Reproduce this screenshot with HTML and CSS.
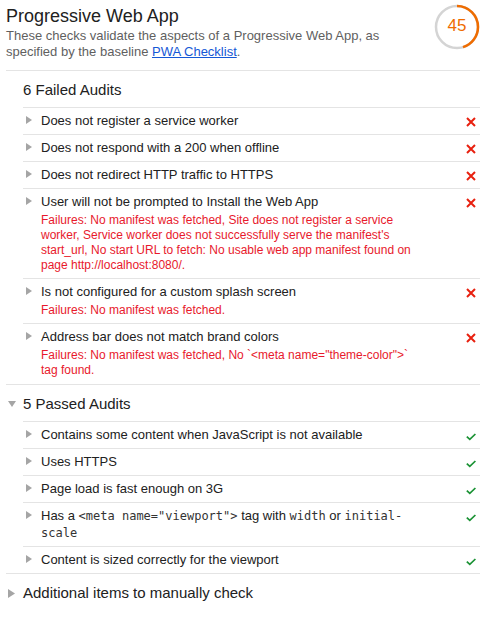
FILE: index.html
```html
<!DOCTYPE html>
<html lang="en">
<head>
<meta charset="utf-8">
<title>Progressive Web App</title>
<link rel="stylesheet" href="styles.css">
</head>
<body>
<div class="report">
  <header class="cat-header">
    <div class="cat-text">
      <div class="cat-title">Progressive Web App</div>
      <div class="cat-desc">These checks validate the aspects of a Progressive Web App, as specified by the baseline <a href="#">PWA Checklist</a>.</div>
    </div>
    <div class="gauge">
      <svg width="46" height="46" viewBox="0 0 46 46">
        <circle cx="23" cy="23" r="21" fill="none" stroke="#d4d4d4" stroke-width="2.5"/>
        <circle cx="23" cy="23" r="21" fill="none" stroke="#ef6c00" stroke-width="2.5" stroke-dasharray="59.4 200" transform="rotate(-90 23 23)"/>
      </svg>
      <span class="gauge-value">45</span>
    </div>
  </header>

  <section class="group">
    <div class="group-head"><span class="head-marker"></span>6 Failed Audits</div>
    <div class="audits">
      <div class="audit">
        <span class="tri"><svg width="6" height="8" viewBox="0 0 6 8"><polygon points="0,0 6,4 0,8" fill="#a5a5a5"/></svg></span>
        <div class="audit-body"><div class="audit-title">Does not register a service worker</div></div>
        <span class="status"><svg width="10" height="10" viewBox="0 0 10 10"><path d="M1 1 L9 9 M9 1 L1 9" stroke="#e8200f" stroke-width="2"/></svg></span>
      </div>
      <div class="audit">
        <span class="tri"><svg width="6" height="8" viewBox="0 0 6 8"><polygon points="0,0 6,4 0,8" fill="#a5a5a5"/></svg></span>
        <div class="audit-body"><div class="audit-title">Does not respond with a 200 when offline</div></div>
        <span class="status"><svg width="10" height="10" viewBox="0 0 10 10"><path d="M1 1 L9 9 M9 1 L1 9" stroke="#e8200f" stroke-width="2"/></svg></span>
      </div>
      <div class="audit">
        <span class="tri"><svg width="6" height="8" viewBox="0 0 6 8"><polygon points="0,0 6,4 0,8" fill="#a5a5a5"/></svg></span>
        <div class="audit-body"><div class="audit-title">Does not redirect HTTP traffic to HTTPS</div></div>
        <span class="status"><svg width="10" height="10" viewBox="0 0 10 10"><path d="M1 1 L9 9 M9 1 L1 9" stroke="#e8200f" stroke-width="2"/></svg></span>
      </div>
      <div class="audit">
        <span class="tri"><svg width="6" height="8" viewBox="0 0 6 8"><polygon points="0,0 6,4 0,8" fill="#a5a5a5"/></svg></span>
        <div class="audit-body">
          <div class="audit-title">User will not be prompted to Install the Web App</div>
          <div class="audit-fail">Failures: No manifest was fetched, Site does not register a service worker, Service worker does not successfully serve the manifest's start_url, No start URL to fetch: No usable web app manifest found on page http://localhost:8080/.</div>
        </div>
        <span class="status"><svg width="10" height="10" viewBox="0 0 10 10"><path d="M1 1 L9 9 M9 1 L1 9" stroke="#e8200f" stroke-width="2"/></svg></span>
      </div>
      <div class="audit">
        <span class="tri"><svg width="6" height="8" viewBox="0 0 6 8"><polygon points="0,0 6,4 0,8" fill="#a5a5a5"/></svg></span>
        <div class="audit-body">
          <div class="audit-title">Is not configured for a custom splash screen</div>
          <div class="audit-fail">Failures: No manifest was fetched.</div>
        </div>
        <span class="status"><svg width="10" height="10" viewBox="0 0 10 10"><path d="M1 1 L9 9 M9 1 L1 9" stroke="#e8200f" stroke-width="2"/></svg></span>
      </div>
      <div class="audit audit-end">
        <span class="tri"><svg width="6" height="8" viewBox="0 0 6 8"><polygon points="0,0 6,4 0,8" fill="#a5a5a5"/></svg></span>
        <div class="audit-body">
          <div class="audit-title">Address bar does not match brand colors</div>
          <div class="audit-fail">Failures: No manifest was fetched, No `&lt;meta name="theme-color"&gt;` tag found.</div>
        </div>
        <span class="status"><svg width="10" height="10" viewBox="0 0 10 10"><path d="M1 1 L9 9 M9 1 L1 9" stroke="#e8200f" stroke-width="2"/></svg></span>
      </div>
    </div>
  </section>

  <section class="group">
    <div class="group-head"><span class="head-marker"><svg width="8" height="6" viewBox="0 0 8 6"><polygon points="0,0 8,0 4,6" fill="#a5a5a5"/></svg></span>5 Passed Audits</div>
    <div class="audits">
      <div class="audit">
        <span class="tri"><svg width="6" height="8" viewBox="0 0 6 8"><polygon points="0,0 6,4 0,8" fill="#a5a5a5"/></svg></span>
        <div class="audit-body"><div class="audit-title">Contains some content when JavaScript is not available</div></div>
        <span class="status"><svg width="10" height="10" viewBox="0 0 10 10"><path d="M0.8 5.6 L3.8 8.4 L9.4 3" fill="none" stroke="#1a9234" stroke-width="1.7"/></svg></span>
      </div>
      <div class="audit">
        <span class="tri"><svg width="6" height="8" viewBox="0 0 6 8"><polygon points="0,0 6,4 0,8" fill="#a5a5a5"/></svg></span>
        <div class="audit-body"><div class="audit-title">Uses HTTPS</div></div>
        <span class="status"><svg width="10" height="10" viewBox="0 0 10 10"><path d="M0.8 5.6 L3.8 8.4 L9.4 3" fill="none" stroke="#1a9234" stroke-width="1.7"/></svg></span>
      </div>
      <div class="audit">
        <span class="tri"><svg width="6" height="8" viewBox="0 0 6 8"><polygon points="0,0 6,4 0,8" fill="#a5a5a5"/></svg></span>
        <div class="audit-body"><div class="audit-title">Page load is fast enough on 3G</div></div>
        <span class="status"><svg width="10" height="10" viewBox="0 0 10 10"><path d="M0.8 5.6 L3.8 8.4 L9.4 3" fill="none" stroke="#1a9234" stroke-width="1.7"/></svg></span>
      </div>
      <div class="audit">
        <span class="tri"><svg width="6" height="8" viewBox="0 0 6 8"><polygon points="0,0 6,4 0,8" fill="#a5a5a5"/></svg></span>
        <div class="audit-body"><div class="audit-title">Has a <code>&lt;meta name="viewport"&gt;</code> tag with <code>width</code> or <code>initial-scale</code></div></div>
        <span class="status"><svg width="10" height="10" viewBox="0 0 10 10"><path d="M0.8 5.6 L3.8 8.4 L9.4 3" fill="none" stroke="#1a9234" stroke-width="1.7"/></svg></span>
      </div>
      <div class="audit">
        <span class="tri"><svg width="6" height="8" viewBox="0 0 6 8"><polygon points="0,0 6,4 0,8" fill="#a5a5a5"/></svg></span>
        <div class="audit-body"><div class="audit-title">Content is sized correctly for the viewport</div></div>
        <span class="status"><svg width="10" height="10" viewBox="0 0 10 10"><path d="M0.8 5.6 L3.8 8.4 L9.4 3" fill="none" stroke="#1a9234" stroke-width="1.7"/></svg></span>
      </div>
    </div>
  </section>

  <section class="group group-last">
    <div class="group-head"><span class="head-marker"><svg width="7" height="9" viewBox="0 0 7 9"><polygon points="0,0 7,4.5 0,9" fill="#a5a5a5"/></svg></span>Additional items to manually check</div>
  </section>
</div>
</body>
</html>
```

FILE: styles.css
```css
html, body {
  margin: 0;
  padding: 0;
  background: #ffffff;
}

body {
  font-family: "Liberation Sans", Arial, sans-serif;
  color: #212121;
}

.report {
  padding: 0 13px 0 6px;
}

.cat-header {
  display: flex;
  align-items: flex-start;
  padding-top: 5px;
  padding-bottom: 10px;
}

.cat-text {
  flex: 1;
  padding-right: 20px;
}

.cat-title {
  font-size: 18px;
  line-height: 22px;
  color: #212121;
}

.cat-desc {
  margin-top: 1px;
  font-size: 13px;
  line-height: 16px;
  color: #5f5f5f;
}

.cat-desc a {
  color: #1558d6;
  text-decoration: underline;
}

.gauge {
  position: relative;
  width: 46px;
  height: 46px;
  margin-top: -1px;
  flex: none;
}

.gauge svg {
  display: block;
}

.gauge-value {
  position: absolute;
  inset: 0;
  display: flex;
  align-items: center;
  justify-content: center;
  font-size: 17px;
  color: #ef6c00;
  padding-bottom: 2px;
  box-sizing: border-box;
}

.group {
  border-top: 1px solid #e4e4e4;
}

.group-head {
  display: flex;
  align-items: center;
  font-size: 15px;
  line-height: 16px;
  padding: 11px 0 9px 0;
  color: #212121;
}

.head-marker {
  width: 17px;
  flex: none;
  display: flex;
  align-items: center;
  padding-left: 2px;
  box-sizing: border-box;
}

.head-marker svg {
  display: block;
}

.audits {
  margin-left: 17px;
}

.audit {
  display: flex;
  align-items: flex-start;
  border-top: 1px solid #e4e4e4;
  padding: 5px 0;
}

.audit-end {
  padding-bottom: 6px;
}

.tri {
  width: 18px;
  flex: none;
  padding-left: 3px;
  padding-top: 3px;
  box-sizing: border-box;
}

.tri svg {
  display: block;
}

.audit-body {
  width: 378px;
  flex: none;
}

.audit-title {
  font-size: 13px;
  line-height: 16px;
  color: #212121;
}

.audit-title code {
  font-family: "DejaVu Sans Mono", "Liberation Mono", monospace;
  font-size: 12px;
  line-height: 16.5px;
  color: #333;
}

.audit-fail {
  margin-top: 3px;
  font-size: 12px;
  line-height: 15px;
  color: #e8192c;
}

.status {
  flex: 1;
  display: flex;
  justify-content: flex-end;
  padding-right: 4px;
  padding-top: 4px;
}

.status svg {
  display: block;
}
```
